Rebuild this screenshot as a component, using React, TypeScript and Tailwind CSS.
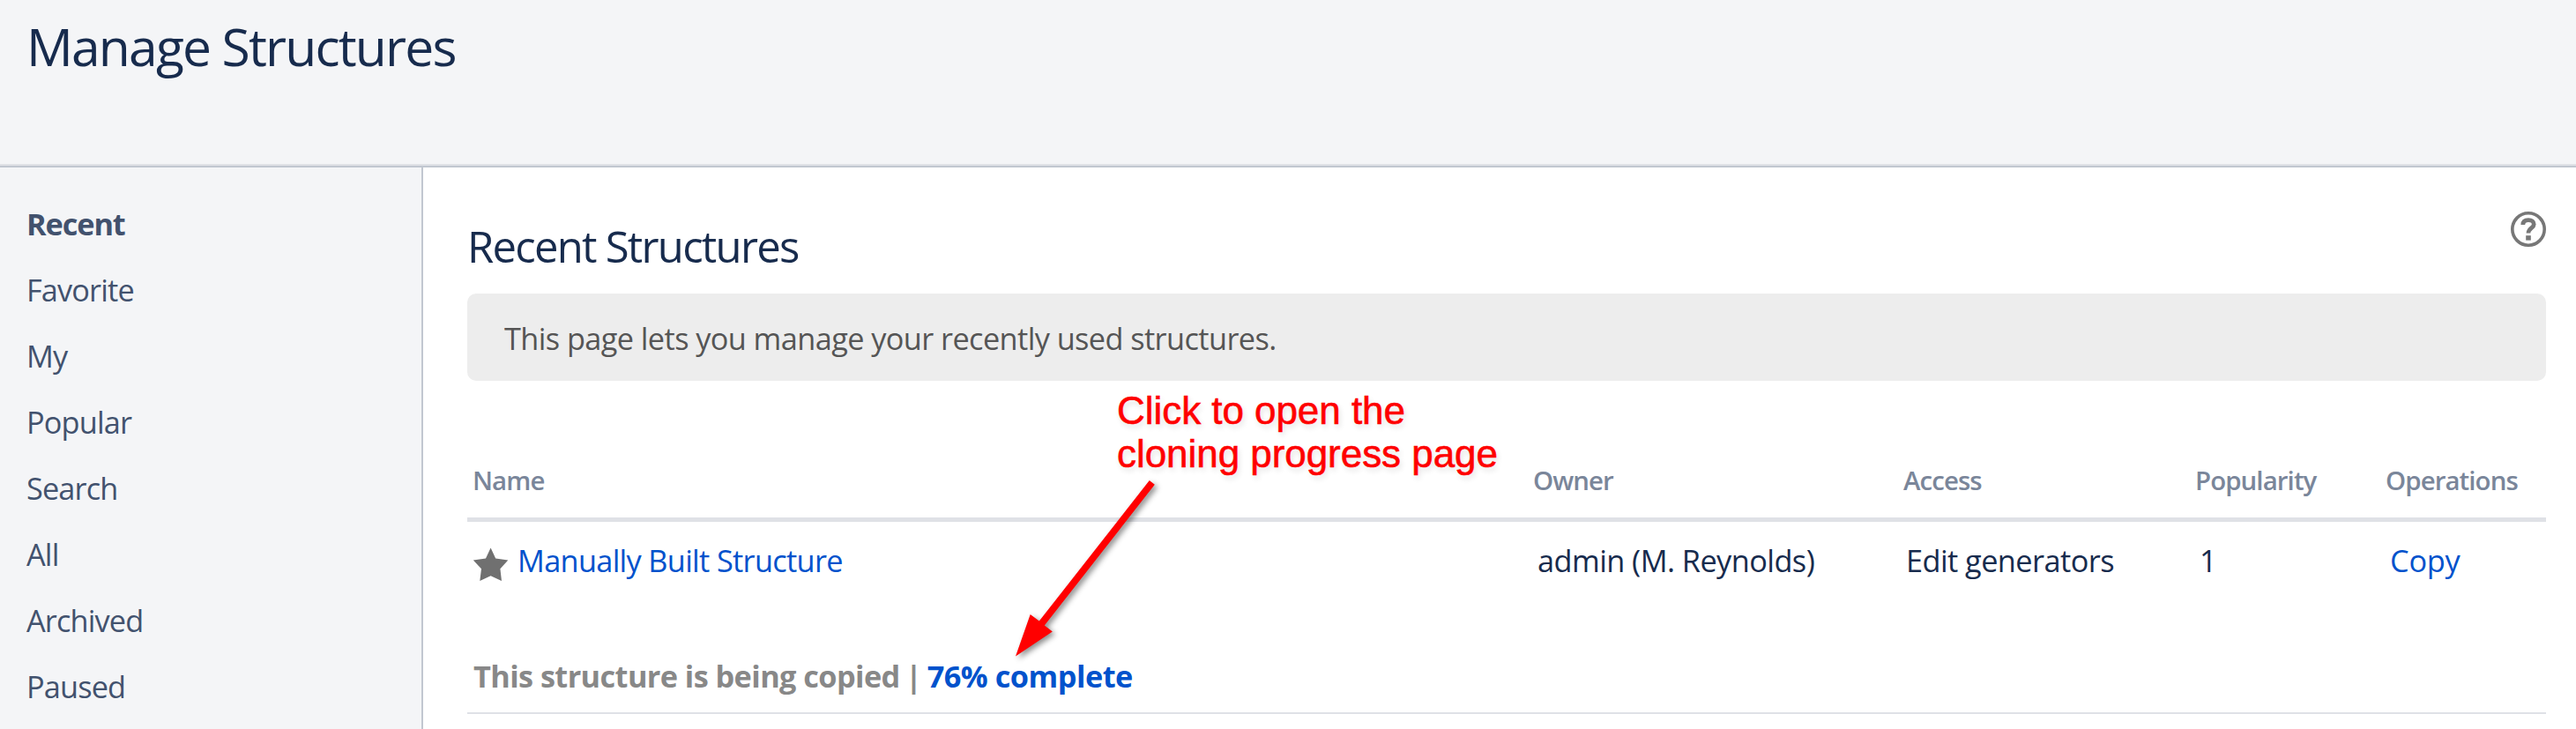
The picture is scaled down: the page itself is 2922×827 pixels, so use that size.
import React from "react";

const NAV = ["Recent", "Favorite", "My", "Popular", "Search", "All", "Archived", "Paused"];

const COLS = "grid grid-cols-[1209px_420px_331px_216px_1fr]";

function StarIcon() {
  return (
    <svg className="absolute left-[6px] top-[29px]" width="42" height="40" viewBox="536 621 42 40">
      <path
        fill="#707070"
        d="M556.6 621.5L562.2 633.4L576.3 635.4L567.4 645.2L569 659L556.6 653.2L544.3 659L546 645.2L536.8 635.4L551 633.4Z"
      />
    </svg>
  );
}

function HelpIcon() {
  return (
    <svg width="40" height="40" viewBox="0 0 40 40" fill="none">
      <circle cx="20" cy="20" r="18.2" stroke="#777777" strokeWidth="3.6" />
      <path d="M13.8 15C13.8 11.2 16.4 9.6 20 9.6C23.8 9.6 26.2 11.4 26.2 14.4C26.2 18.6 20 18.8 20 24.4" stroke="#777777" strokeWidth="4.8" />
      <rect x="17.2" y="27.2" width="5.6" height="5.4" fill="#777777" />
    </svg>
  );
}

function Annotation() {
  return (
    <>
      <p className="absolute left-[1267px] top-[441px] font-['Liberation_Sans',sans-serif] text-[44px] leading-[49px] tracking-[-0.05px] whitespace-nowrap text-[#ff0000] [-webkit-text-stroke:0.6px_#ff0000] [text-shadow:2px_4px_6px_rgba(0,0,0,0.12)]">
        Click to open the
        <br />
        cloning progress page
      </p>
      <svg
        className="absolute left-[1140px] top-[530px] overflow-visible drop-shadow-[3px_3px_3px_rgba(0,0,0,0.45)]"
        width="180"
        height="230"
        viewBox="1140 530 180 230"
      >
        <path fill="#ff0000" d="M1303.8 545L1309.8 549.8L1184.8 709.5L1193.8 716.5L1152 744.5L1168.7 697L1178.8 704.4Z" />
      </svg>
    </>
  );
}

export default function App() {
  return (
    <div className="relative flex h-[827px] w-[2922px] flex-col overflow-hidden bg-white font-['Open_Sans','Noto_Sans',sans-serif] text-[34.3px] tracking-[-0.55px] text-[#172b4d]">
      <header className="h-[190px] border-b-2 border-[#c1c7d0] bg-[#f4f5f7]">
        <div className="h-[188px] border-b-2 border-[#dfe1e6] pt-[16px] pl-[30px]">
          <h1 className="text-[58.8px] leading-[72px] tracking-[-1.85px]">Manage Structures</h1>
        </div>
      </header>
      <div className="flex flex-1">
        <nav className="w-[480px] border-r-2 border-[#c1c7d0] bg-[#f4f5f7] pt-[26px] pl-[30px] tracking-[-0.85px] text-[#42526e]">
          {NAV.map((item, i) => (
            <a key={item} className={i === 0 ? "block leading-[75px] font-bold tracking-[-1.1px]" : "block leading-[75px]"}>
              {item}
            </a>
          ))}
        </nav>
        <main className="flex-1 pr-[34px] pl-[50px]">
          <div className="flex h-[143px] items-start justify-between">
            <h2 className="pt-[59px] text-[49px] leading-[60px] tracking-[-1.75px]">Recent Structures</h2>
            <div className="pt-[50px]">
              <HelpIcon />
            </div>
          </div>
          <div className="h-[99px] rounded-[10px] bg-[#ededed] pl-[42px] leading-[101px] tracking-[-0.59px] text-[#555555]">
            This page lets you manage your recently used structures.
          </div>
          <div className={`${COLS} mt-[70px] h-[90px] border-b-5 border-[#dfe1e6] text-[29.4px] leading-[87px] font-semibold tracking-[-0.9px] text-[#7a869a]`}>
            <div className="pl-[6px]">Name</div>
            <div>Owner</div>
            <div>Access</div>
            <div>Popularity</div>
            <div>Operations</div>
          </div>
          <div className="h-[218px] border-b-2 border-[#dfe1e6]">
            <div className={`${COLS} relative h-[130px] leading-[88px]`}>
              <div className="pl-[57px] tracking-[-0.68px] text-[#0052cc]">
                <StarIcon />
                Manually Built Structure
              </div>
              <div className="pl-[5px]">admin (M. Reynolds)</div>
              <div className="pl-[3px]">Edit generators</div>
              <div className="pl-[5px]">1</div>
              <div className="pl-[5px] tracking-[-0.2px] text-[#0052cc]">Copy</div>
            </div>
            <div className="pl-[7px] leading-[90px] font-bold tracking-[-0.59px] text-[#888888]">
              This structure is being copied <span className="-ml-[2px] -mr-[2px]">|</span>{" "}
              <a className="tracking-[-0.5px] text-[#0052cc]">76% complete</a>
            </div>
          </div>
        </main>
      </div>
      <Annotation />
    </div>
  );
}
